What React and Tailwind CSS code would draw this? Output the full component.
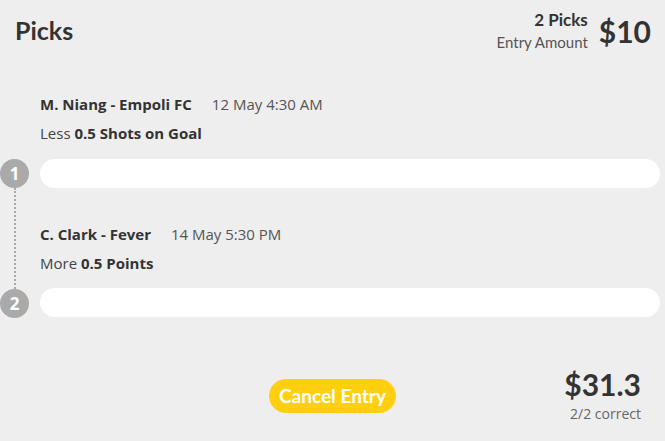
import React from 'react';

const picks = [
    { n: 1, player: 'M. Niang - Empoli FC', date: '12 May 4:30 AM', dir: 'Less', line: '0.5 Shots on Goal' },
    { n: 2, player: 'C. Clark - Fever', date: '14 May 5:30 PM', dir: 'More', line: '0.5 Points' },
];

function PickText({ pick, first }) {
    return (
        <div className={first ? 'pl-[11px]' : 'pl-[11px] mt-[36px]'}>
            <div className="flex items-center h-[20px] text-[15px]">
                <span className="font-bold text-[#333]">{pick.player}</span>
                <span className="ml-[20px] text-[#555]">{pick.date}</span>
            </div>
            <div className="flex items-center h-[20px] mt-[9px] text-[15px] text-[#444]">
                {pick.dir}&nbsp;<span className="font-bold text-[#333]">{pick.line}</span>
            </div>
        </div>
    );
}

export default function App() {
    return (
        <div className="w-full h-[441px] bg-[#eeeeee] flex flex-col text-[#333]" style={{ fontFamily: '"Open Sans", "Noto Sans", sans-serif' }}>
            <div className="flex items-center justify-between pl-[15px] pr-[14px] pt-[5px] h-[56px]" style={{ fontFamily: 'Lato, sans-serif' }}>
                <h1 className="text-[25px] font-bold text-[#333]">Picks</h1>
                <div className="flex items-center gap-[11px]">
                    <div className="flex flex-col items-end leading-none">
                        <span className="text-[17px] font-bold text-[#333]">2 Picks</span>
                        <span className="text-[15px] text-[#555] mt-[7px]">Entry Amount</span>
                    </div>
                    <span className="text-[30px] font-bold text-[#333] leading-none">$10</span>
                </div>
            </div>

            <div className="flex pt-[38px] pr-[5px]">
                <div className="w-[29px] flex flex-col items-center pt-[65px]">
                    <div className="w-[29px] h-[29px] rounded-full bg-[#aaaaaa] text-white font-bold text-[17px] flex items-center justify-center">1</div>
                    <div className="h-[101px] border-l-2 border-dotted border-[#aaaaaa]"></div>
                    <div className="w-[29px] h-[29px] rounded-full bg-[#aaaaaa] text-white font-bold text-[17px] flex items-center justify-center">2</div>
                </div>
                <div className="flex-1 flex flex-col">
                    <PickText pick={picks[0]} first />
                    <div className="ml-[11px] mt-[16px] h-[29px] rounded-full bg-white"></div>
                    <PickText pick={picks[1]} />
                    <div className="ml-[11px] mt-[15px] h-[29px] rounded-full bg-white"></div>
                </div>
            </div>

            <div className="grid grid-cols-3 items-start mt-[51px]">
                <div></div>
                <div className="flex justify-center pt-[10px]" style={{ fontFamily: 'Lato, sans-serif' }}>
                    <button className="h-[34px] px-[10px] rounded-full bg-[#ffcf10] text-white font-bold text-[19px]">Cancel Entry</button>
                </div>
                <div className="flex flex-col items-end pr-[24px]">
                    <span className="text-[30px] font-bold text-[#333] leading-none" style={{ fontFamily: 'Lato, sans-serif' }}>$31.3</span>
                    <span className="text-[14px] leading-[20px] text-[#666] mt-[5px]">2/2 correct</span>
                </div>
            </div>
        </div>
    );
}
